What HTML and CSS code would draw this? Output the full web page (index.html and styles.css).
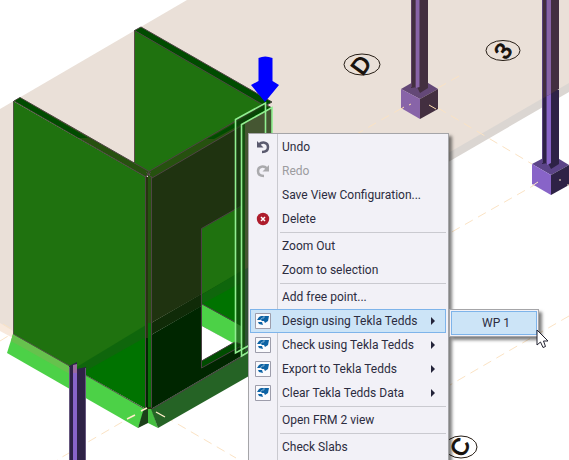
FILE: index.html
```html
<!DOCTYPE html>
<html lang="en">
<head>
<meta charset="utf-8">
<title>Structure view</title>
<link rel="stylesheet" href="styles.css">
</head>
<body>
<main class="viewport">
<svg class="scene" viewBox="0 0 569 460" preserveAspectRatio="xMinYMin slice" role="img" aria-label="3D model">
  <!-- slab -->
  <path fill="#dbd6d2" d="M0 0H569V92L248 278 75 376 13 338Z"/>
  <path fill="#f8e9dc" d="M0 320L13 329V338L0 331Z"/>
  <path fill="#eae0d8" d="M0 0H569V83L75 369 0 323Z"/>
  <path fill="#fff" d="M0 0H187L0 109Z"/>
  <!-- grid lines -->
  <g class="grid">
    <path d="M459 76L438 88M402 108L355 135M538 183L450 233M569 316L450 385"/>
    <path d="M438 108L532 164M148 407L57 460M152 409L236 458M0 341L13 333M3 324L13 330"/>
  </g>
  <!-- back wall -->
  <path fill="#1f720f" d="M134 30L266 105 149 174 134 163Z"/>
  <path fill="#004c00" stroke="#4f4444" d="M134.500 30.500L141 27 272 102 265 106Z"/>
  <path stroke="#5b4e49" d="M134.500 30V162"/>
  <!-- skirt -->
  <path fill="#4cd147" d="M13 334L145 409 138 428 7 353Z"/>
  <path fill="#66c24d" d="M13 334L75 368V377L11 341Z"/>
  <path fill="#1c401a" d="M138 428L144 408H148V423Z"/>
  <path fill="#45bf40" d="M148 407H151L158 428 148 423Z"/>
  <path fill="#256325" d="M151 409L272 338V363L158 428Z"/>
  <!-- left wall -->
  <path fill="#1f720f" d="M13 101L146 177V326L75 369 13 334Z"/>
  <path fill="#0f660c" d="M146 325V338L83 374 75 368Z"/>
  <path fill="#007300" d="M146 337V409L82 373Z"/>
  <path fill="none" stroke="#4d5542" d="M13.500 101V334L145 409"/>
  <path fill="#26510f" stroke="#4f4444" d="M14 101L20 97.500 150 172 146 177Z"/>
  <path fill="#004c00" d="M15 101L20 98 88 138H79Z"/>
  <!-- front wall -->
  <path fill="#1f3310" d="M151 177L272 108V254L151 323Z"/>
  <path fill="#102b08" d="M151 323L272 253V266L151 335Z"/>
  <path fill="#002600" d="M151 335L272 265V338L151 409Z"/>
  <path fill="#26510f" stroke="#4f4444" d="M148 172L265 104 272 108 152 178Z"/>
  <path fill="#004c00" d="M218 133L264 106 270 108 214 139H207Z"/>
  <path stroke="#4b4144" d="M152 409L248 353"/>
  <!-- door opening -->
  <path fill="#1f720f" d="M201 229L248 202V268L201 295Z"/>
  <path fill="#0f660c" d="M201 295L248 267V279L201 307Z"/>
  <path fill="#007300" d="M202 304L248 279V332Z"/>
  <path fill="#4cd147" d="M202 304L248 330V352L202 326Z"/>
  <path fill="#fff" d="M202 326L233 343 202 361Z"/>
  <path fill="#004c00" stroke="#4b4144" d="M201.500 361L235 342 243 345 201.500 368Z"/>
  <path fill="none" stroke="#4b4144" d="M201.500 368V228.500L241 206M202 304L235 322"/>
  <!-- corner post -->
  <path fill="#26340f" d="M145 177H152V409H145Z"/>
  <path fill="#265310" d="M148 175H151V323H148Z"/>
  <path fill="#0a6f08" d="M148 323H151V407H148Z"/>
  <path fill="#002600" d="M146 338H148V408H146Z"/>
  <path stroke="#4f4444" d="M145.500 177V408M151.500 177V408M145 177L151 172M146 172L152 178"/>
  <!-- selected panel -->
  <path fill="#143d10" fill-opacity=".55" d="M236 119L265 103V107L241 124V354L236 352Z"/>
  <path fill="#455632" d="M241 125L272 108V253L248 267V350H244V206H241Z"/>
  <path fill="#2f5033" d="M244 270L249 267V350L244 353Z"/>
  <path fill="#14500f" d="M241 126L245 124V354H241Z"/>
  <g fill="none" stroke="#90ee90" stroke-width="1.600">
    <path d="M265.500 140V103L235.500 119.500V353L250 345"/>
    <path d="M272 140V107.500L241.500 124.500V356L250 351"/>
  </g>
  <!-- load arrow -->
  <path fill="#00f" d="M258.500 58Q265 55 272.500 58V81L279 85 265 102 251 85 258.500 81Z"/>
  <!-- near column -->
  <path fill="#2e2246" d="M69 366L77 362V369L86 367V460H69Z"/>
  <path fill="#8864c8" d="M73 368H77V460H73Z"/>
  <path fill="#9a6ca0" d="M73 365L77 364V373H73Z"/>
  <path stroke="#66577e" d="M69.500 367V460M85.500 368V460"/>
  <g stroke="#ffedc9" stroke-width="1.400"><path d="M127 419L135 415M141 411L147 408M156 412L165 417"/></g>
  <!-- first far column -->
  <path fill="#644877" d="M401 89L420 78 438 89 420 99Z"/>
  <path fill="#8864a8" d="M401 89L420 99V119L401 108Z"/>
  <path fill="#432f40" d="M420 99L438 89V109L420 119Z"/>
  <path fill="#432f40" d="M411 0H428V88L420 93 417 87 411 88Z"/>
  <path fill="#8864a8" d="M416 0H419.500V87L416 88Z"/>
  <path stroke="#5e4064" d="M411.500 0V87M415.500 0V87"/>
  <path stroke="#ffdfb0" d="M401 109L404 107M409 105L411 104M429 105L436 109"/>
  <!-- second far column -->
  <path fill="#5c4488" d="M532 164L551 154 569 165 551 175Z"/>
  <path fill="#8864c8" d="M532 164L551 175V195L532 184Z"/>
  <path fill="#2e2246" d="M551 175L569 165V185L551 195Z"/>
  <path fill="#2e2246" d="M542 90H559V164L551 169 548 163 542 164Z"/>
  <path fill="#8864c8" d="M547 90H551V163L547 165Z"/>
  <path fill="#432f40" d="M542 0H559V89L542 99Z"/>
  <path fill="#8864a8" d="M547 0H551V94L547 96Z"/>
  <path stroke="#57417d" d="M542.500 0V163M546.500 0V163"/>
  <path stroke="#ffedc9" d="M532 186L538 182M559 180H561M567 185H569"/>
  <!-- grid bubbles -->
  <g fill="none" stroke="#251c14">
    <ellipse cx="362" cy="64.500" rx="18" ry="10.500"/>
    <ellipse cx="503" cy="50.500" rx="17" ry="10"/>
    <ellipse cx="461" cy="447" rx="16" ry="11"/>
  </g>
  <text class="bubble" transform="translate(361 65) rotate(-54)" y="8">D</text>
  <text class="bubble" transform="translate(503 51) rotate(-54)" y="8">3</text>
  <text class="bubble" transform="translate(460 447) rotate(-60)" y="8">C</text>
</svg>

<svg class="defs" aria-hidden="true">
  <symbol id="tedds" viewBox="0 0 16 16">
    <path fill="#fafafd" stroke="#9d9dab" d="M.5.5H15.500V15.500H.5Z"/>
    <path fill="#0c62a4" d="M6 3H14L13 8 10 10 9 8H7L6 7H2L4 4ZM3 9H7L8 12 4 11Z"/>
    <path fill="none" stroke="#a9cbe4" stroke-width=".7" d="M5.500 7L7 5H9V3"/>
  </symbol>
</svg>

<div class="menus">
  <div class="menu" role="menu">
    <button class="item" role="menuitem"><span class="icon"><svg width="14" height="14" viewBox="0 0 14 14"><path fill="none" stroke="#5a5a6e" stroke-width="2.500" d="M3 4.500C6 1.500 12 2 12 7C12 10.500 9.500 12 6 12"/><path fill="#5a5a6e" d="M1 1V7.500H7.500Z"/></svg></span><span class="label">Undo</span></button>
    <button class="item" role="menuitem" disabled><span class="icon"><svg width="14" height="14" viewBox="0 0 14 14"><path fill="none" stroke="#aaaaad" stroke-width="2.500" d="M11 4.500C8 1.500 2 2 2 7C2 10.500 4.500 12 8 12"/><path fill="#aaaaad" d="M13 1V7.500H6.500Z"/></svg></span><span class="label">Redo</span></button>
    <button class="item" role="menuitem"><span class="icon"></span><span class="label">Save View Configuration...</span></button>
    <button class="item" role="menuitem"><span class="icon"><svg width="14" height="14" viewBox="0 0 14 14"><circle cx="7" cy="7" r="6.200" fill="#ae1c2c"/><path stroke="#fff" stroke-width="1.500" d="M5 5L9 9M9 5L5 9"/></svg></span><span class="label">Delete</span></button>
    <hr class="rule">
    <button class="item" role="menuitem"><span class="icon"></span><span class="label">Zoom Out</span></button>
    <button class="item" role="menuitem"><span class="icon"></span><span class="label">Zoom to selection</span></button>
    <hr class="rule">
    <button class="item" role="menuitem"><span class="icon"></span><span class="label">Add free point...</span></button>
    <button class="item active" role="menuitem" aria-expanded="true"><span class="icon"><svg width="16" height="16"><use href="#tedds"/></svg></span><span class="label">Design using Tekla Tedds</span><span class="arrow"></span></button>
    <button class="item" role="menuitem"><span class="icon"><svg width="16" height="16"><use href="#tedds"/></svg></span><span class="label">Check using Tekla Tedds</span><span class="arrow"></span></button>
    <button class="item" role="menuitem"><span class="icon"><svg width="16" height="16"><use href="#tedds"/></svg></span><span class="label">Export to Tekla Tedds</span><span class="arrow"></span></button>
    <button class="item" role="menuitem"><span class="icon"><svg width="16" height="16"><use href="#tedds"/></svg></span><span class="label">Clear Tekla Tedds Data</span><span class="arrow"></span></button>
    <hr class="rule">
    <button class="item" role="menuitem"><span class="icon"></span><span class="label">Open FRM 2 view</span></button>
    <hr class="rule">
    <button class="item" role="menuitem"><span class="icon"></span><span class="label">Check Slabs</span></button>
  </div>
  <div class="submenu" role="menu">
    <button class="choice" role="menuitem">WP 1</button>
  </div>
  <svg class="pointer" width="13" height="20" viewBox="0 0 13 20" aria-hidden="true"><path fill="#fff" stroke="#222230" d="M1 1V16L4.500 13 7 18.500 9.500 17.500 7.500 12H12Z"/></svg>
</div>
</main>
</body>
</html>
```
FILE: styles.css
```css
* { box-sizing: border-box; }

body {
  margin: 0;
  font-family: Roboto, "Open Sans", sans-serif;
  font-size: 12px;
  color: #2c2c40;
}

.viewport {
  position: relative;
  height: 100vh;
  overflow: hidden;
  background: #fff;
}

.scene {
  display: block;
  width: 100%;
  height: 100%;
}

.defs {
  position: absolute;
  width: 0;
  height: 0;
}

.grid {
  fill: none;
  stroke: #fbe3c4;
  stroke-dasharray: 9 6;
}

.bubble {
  font: 23px "Liberation Sans", sans-serif;
  fill: #17110c;
  stroke: #17110c;
  text-anchor: middle;
}

.menus {
  position: absolute;
  left: 248px;
  top: 133px;
}

.menu {
  width: 201px;
  padding: 1px 2px 12px 1px;
  border: 1px solid #a5a5a8;
  background: linear-gradient(90deg, transparent 28px, #cacad0 28px, #cacad0 29px, transparent 29px) #f2f1f7;
  box-shadow: 3px 3px 3px rgba(0, 0, 0, 0.5);
}

.item {
  display: flex;
  align-items: center;
  width: 100%;
  height: 24px;
  padding: 0 10px 0 0;
  border: 1px solid transparent;
  background: none;
  font: inherit;
  color: inherit;
  text-align: left;
  white-space: nowrap;
}

.item:disabled { color: #9c9c9f; }

.item.active {
  border-color: #7eb4ea;
  background: #cce4f7;
}

.icon {
  display: flex;
  justify-content: center;
  width: 24px;
  margin-right: 7px;
}

.label { flex: 1; }

.arrow {
  border: 4px solid transparent;
  border-left-color: #24243a;
  border-right: 0;
}

.rule {
  height: 1px;
  margin: 1px 0 1px 30px;
  border: 0;
  background: #cacad0;
}

.submenu {
  position: absolute;
  left: 201px;
  top: 176px;
  width: 90px;
  padding: 1px;
  border: 1px solid #a5a5a8;
  background: #f2f1f7;
  box-shadow: 3px 3px 3px rgba(0, 0, 0, 0.5);
}

.choice {
  display: block;
  width: 100%;
  height: 24px;
  padding: 0 0 0 4px;
  border: 1px solid #7eb4ea;
  background: #cce4f7;
  font: inherit;
  color: inherit;
}

.pointer {
  position: absolute;
  left: 288px;
  top: 196px;
}
```
